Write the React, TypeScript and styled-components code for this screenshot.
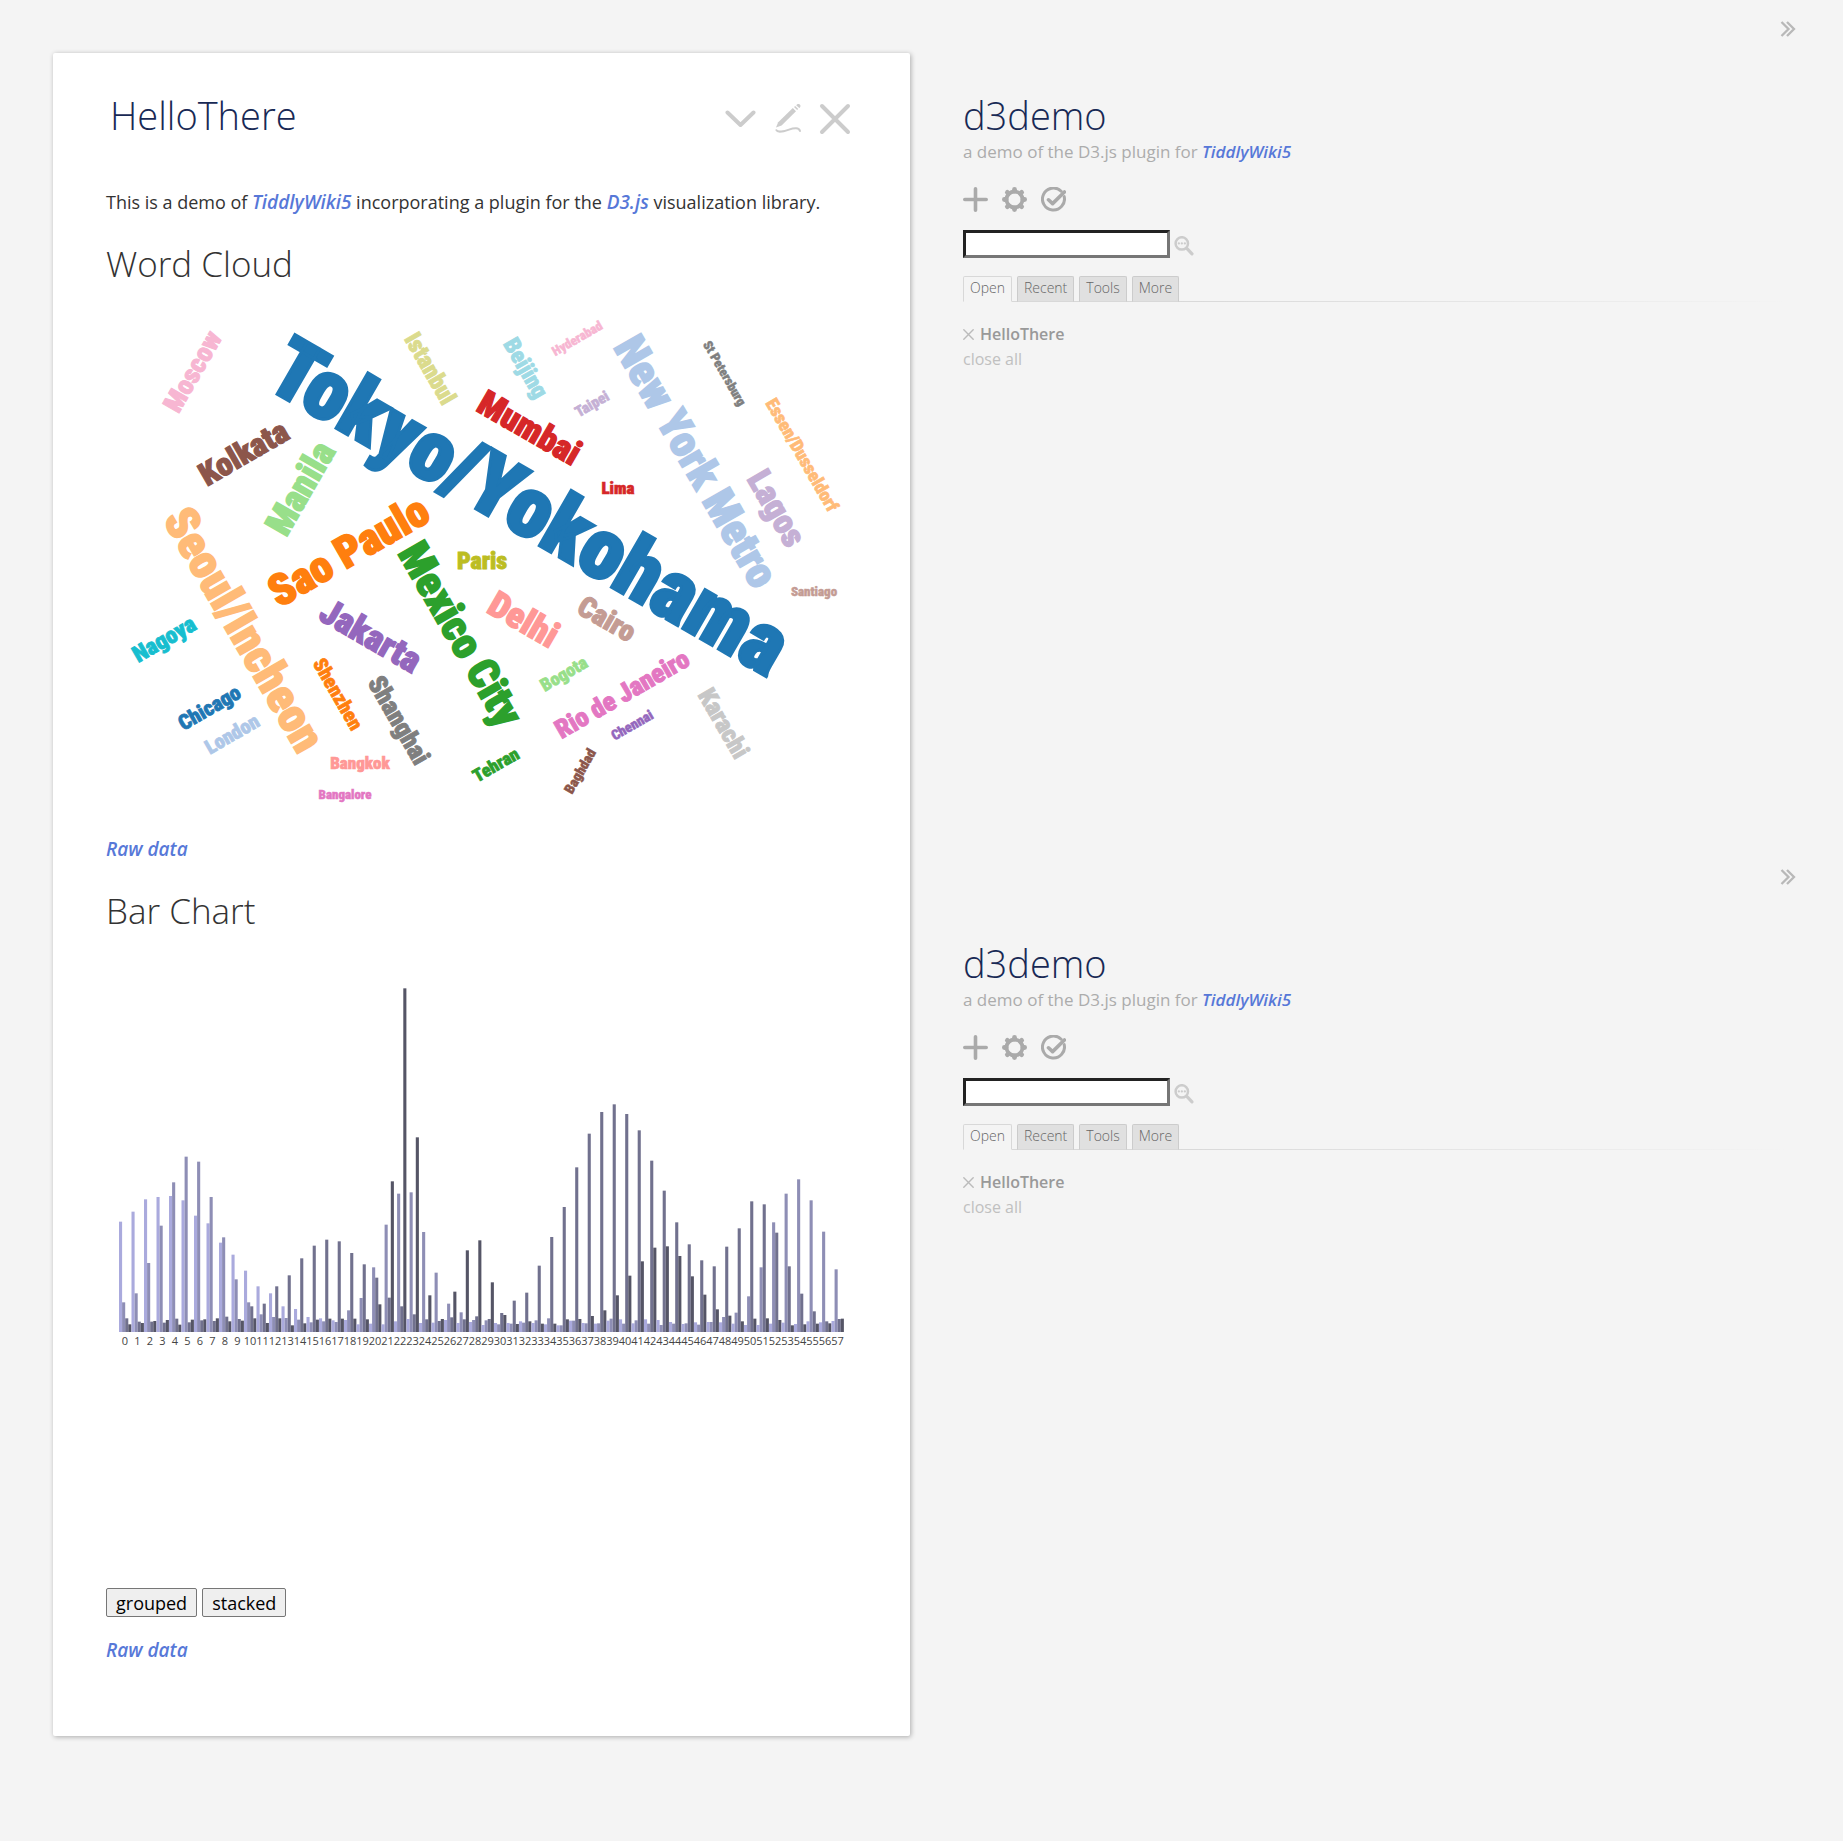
import React, { useState } from 'react';
import styled, { createGlobalStyle } from 'styled-components';

const GlobalStyle = createGlobalStyle`
  *, *::before, *::after { box-sizing: border-box; }
  body {
    margin: 0;
    background: #f4f4f4;
    color: #333;
    font-family: 'Segoe UI', 'Open Sans', 'Noto Sans', sans-serif;
    font-size: 18px;
    line-height: 28px;
  }
`;

const Page = styled.div`
  display: flex;
  align-items: flex-start;
  gap: 53px;
  min-height: 100vh;
  padding-left: 53px;
`;

const Card = styled.main`
  flex: 0 0 46.5vw;
  min-width: 0;
  margin: 53px 0 105px;
  padding: 39px 53px 72px;
  background: #fff;
  border-radius: 2px;
  box-shadow: 1px 1px 5px rgba(0, 0, 0, 0.3);
`;

const CardHeader = styled.header`
  display: flex;
  align-items: center;
  justify-content: space-between;
  padding: 0 6px 0 4px;
  margin-bottom: 50px;
`;

const Title = styled.h1`
  margin: 0;
  color: #182955;
  font-size: 38px;
  font-weight: 300;
  line-height: 46px;
`;

const Heading = styled.h2`
  margin: 26px 0 0;
  font-size: 35px;
  font-weight: 300;
  line-height: 44px;
`;

const Link = styled.a`
  color: #5778d8;
  font-style: italic;
  font-weight: 600;
  text-decoration: none;
`;

const Paragraph = styled.p<{ $top?: number }>`
  margin: ${(p) => p.$top ?? 0}px 0 0;

  ${Link} {
    font-size: 19px;
    line-height: 26px;
  }
`;

const Actions = styled.div`
  display: flex;
  gap: 15px;
  padding-top: 8px;
`;

const IconButton = styled.button<{ $size: number; $color?: string }>`
  display: block;
  width: ${(p) => p.$size}px;
  height: ${(p) => p.$size}px;
  padding: 0;
  border: 0;
  background: none;
  color: ${(p) => p.$color ?? '#aaa'};
  cursor: pointer;
`;

const Icon = styled.svg`
  display: block;
  width: 100%;
  height: 100%;
  fill: none;
  stroke: currentColor;
  stroke-linecap: round;
  stroke-linejoin: round;
`;

const Drawing = styled.svg`
  display: block;
  width: 100%;
  height: auto;
`;

const Word = styled.text`
  font-family: Impact, 'Roboto Condensed', Roboto, sans-serif;
  font-weight: 900;
  text-anchor: middle;
  stroke-width: 0.035em;
`;

const AxisLabel = styled.text`
  fill: #444;
  font-size: 11px;
  text-anchor: middle;
`;

const ButtonRow = styled.div`
  display: flex;
  gap: 5px;
`;

const ChartButton = styled.button`
  height: 29px;
  padding: 0 9px;
  border: 1px solid #767676;
  border-radius: 2px;
  background: #efefef;
  color: #000;
  font: inherit;
`;

const Sidebar = styled.aside`
  flex: 1;
  min-width: 0;
  padding-right: 47px;
`;

const SidebarBlock = styled.section`
  display: flex;
  flex-direction: column;
  min-height: 848px;
  padding-top: 21px;
`;

const ToggleRow = styled.div`
  display: flex;
  justify-content: flex-end;
  margin-bottom: 55px;
`;

const Subtitle = styled.p`
  margin: 0;
  color: #acacac;
  font-size: 17px;
  line-height: 27px;
`;

const Tools = styled.div`
  display: flex;
  gap: 14px;
  margin-top: 22px;
`;

const Search = styled.form`
  display: flex;
  align-items: flex-end;
  gap: 3px;
  margin-top: 18px;
`;

const SearchInput = styled.input`
  width: 207px;
  height: 28px;
  padding: 0 4px;
  border: 3px solid;
  border-color: #222 #767676 #767676 #222;
  border-radius: 0;
  background: #fff;
  font: inherit;
`;

const Tabs = styled.div`
  display: flex;
  gap: 5px;
  margin: 18px 6px 20px 0;
  background: linear-gradient(to right, #d8d8d8 25%, #f4f4f4) bottom / 100% 1px no-repeat;
`;

const Tab = styled.button<{ $selected: boolean }>`
  height: 26px;
  padding: 0 6px 2px;
  border: 1px solid ${(p) => (p.$selected ? '#d8d8d8' : '#ccc')};
  border-bottom-color: ${(p) => (p.$selected ? '#f4f4f4' : '#d8d8d8')};
  border-radius: 2px 2px 0 0;
  background: ${(p) => (p.$selected ? '#f4f4f4' : '#e0e0e0')};
  color: #666;
  font: inherit;
  font-size: 14px;
  font-weight: 300;
  line-height: 22px;
`;

const OpenList = styled.ul`
  margin: 0;
  padding: 0;
  list-style: none;
  font-size: 16px;
  line-height: 25px;
`;

const OpenItem = styled.li`
  display: flex;
  align-items: center;
  gap: 6px;
`;

const OpenLink = styled.a<{ $bold?: boolean }>`
  color: ${(p) => (p.$bold ? '#999' : '#c0c0c0')};
  font-weight: ${(p) => (p.$bold ? 600 : 400)};
  text-decoration: none;
`;

type CloudWord = [text: string, x: number, y: number, angle: number, size: number, color: string];

const cloud: CloudWord[] = [
  ['Tokyo/Yokohama', 531, 505, 30, 85, '#1f77b4'],
  ['New York Metro', 697, 461, 60, 44, '#aec7e8'],
  ['Sao Paulo', 348, 550, -30, 44, '#ff7f0e'],
  ['Seoul/Incheon', 245, 629, 60, 47, '#ffbb78'],
  ['Mexico City', 461, 634, 60, 43, '#2ca02c'],
  ['Manila', 300, 488, -60, 37, '#98df8a'],
  ['Mumbai', 530, 427, 30, 35, '#d62728'],
  ['Delhi', 524, 619, 30, 36, '#ff9896'],
  ['Jakarta', 371, 635, 30, 36, '#9467bd'],
  ['Lagos', 777, 508, 60, 34, '#c5b0d5'],
  ['Kolkata', 243, 452, -30, 32, '#8c564b'],
  ['Cairo', 607, 619, 30, 29, '#c49c94'],
  ['Rio de Janeiro', 622, 694, -30, 26, '#e377c2'],
  ['Moscow', 192, 371, -60, 27, '#f7b6d2'],
  ['Shanghai', 399, 720, 60, 26, '#7f7f7f'],
  ['Karachi', 724, 723, 60, 25, '#c7c7c7'],
  ['Paris', 482, 560, 0, 24, '#bcbd22'],
  ['Istanbul', 431, 368, 60, 24, '#dbdb8d'],
  ['Nagoya', 164, 639, -30, 23, '#17becf'],
  ['Beijing', 526, 368, 60, 23, '#9edae5'],
  ['Chicago', 209, 707, -30, 21, '#1f77b4'],
  ['London', 232, 734, -30, 20, '#aec7e8'],
  ['Shenzhen', 338, 694, 60, 20, '#ff7f0e'],
  ['Essen/Dusseldorf', 802, 455, 60, 18, '#ffbb78'],
  ['Tehran', 496, 765, -30, 18, '#2ca02c'],
  ['Bogota', 564, 674, -30, 18, '#98df8a'],
  ['Lima', 618, 488, 0, 17, '#d62728'],
  ['Bangkok', 360, 763, 0, 17, '#ff9896'],
  ['Chennai', 632, 725, -30, 14, '#9467bd'],
  ['Taipei', 592, 404, -30, 15, '#c5b0d5'],
  ['Baghdad', 580, 771, -60, 14, '#8c564b'],
  ['Santiago', 814, 591, 0, 13, '#c49c94'],
  ['Bangalore', 345, 794, 0, 13, '#e377c2'],
  ['Hyderabad', 577, 338, -30, 13, '#f7b6d2'],
  ['St Petersburg', 725, 373, 60, 13, '#7f7f7f'],
];

const seriesColors = ['#aaaadd', '#8e8eb5', '#71718e', '#555566'];
const CEILING = 1086;

// Level of each of the four series, measured down from the ceiling.
const samples: number[][] = [
  [755, 997, 1045, 1063], [725, 970, 1055, 1059], [688, 879, 1055, 1053], [681, 767, 1058, 1050],
  [678, 637, 1046, 1064], [691, 560, 1057, 1049], [737, 575, 1051, 1048], [760, 681, 1053, 1045],
  [818, 802, 1040, 1054], [854, 928, 1047, 1052], [902, 997, 1009, 1045], [949, 1033, 1001, 1059],
  [970, 1041, 949, 1045], [1009, 1044, 916, 1066], [1017, 1049, 865, 1060], [1041, 1057, 827, 1049],
  [1045, 1054, 809, 1046], [1051, 1056, 814, 1046], [1050, 1021, 849, 1046], [1063, 984, 883, 1048],
  [1061, 892, 923, 1003], [1063, 764, 983, 634], [1054, 671, 1009, 55], [1047, 667, 1033, 502],
  [1059, 786, 1048, 976], [1058, 908, 1053, 1047], [1050, 1001, 1042, 965], [1059, 1027, 1048, 841],
  [1056, 1050, 1039, 811], [1065, 1051, 1047, 937], [1059, 1063, 1029, 1035], [1059, 1061, 992, 1062],
  [1054, 1058, 968, 1054], [1059, 1051, 887, 1061], [1063, 1045, 801, 1061], [1066, 1066, 711, 1048],
  [1052, 1052, 592, 1047], [1059, 1060, 491, 1038], [1061, 1060, 426, 1021], [1052, 1046, 403, 976],
  [1048, 1061, 432, 917], [1060, 1051, 481, 874], [1048, 1061, 572, 833], [1050, 1065, 662, 829],
  [1056, 1061, 757, 858], [1062, 1060, 823, 919], [1057, 1064, 871, 974], [1056, 1056, 889, 1018],
  [1057, 1041, 830, 1037], [1061, 1028, 775, 1054], [1065, 979, 694, 1046], [1065, 892, 703, 1045],
  [1061, 757, 788, 1050], [1058, 671, 889, 1066], [1062, 628, 971, 1063], [1054, 691, 1024, 1061],
  [1057, 785, 1054, 1060], [1053, 898, 1047, 1046],
];

function WordCloud() {
  return (
    <Drawing viewBox="106 286 751 534" role="img" aria-label="Word cloud of city names">
      {cloud.map(([text, x, y, angle, size, color]) => (
        <Word
          key={text}
          fontSize={size}
          fill={color}
          stroke={color}
          transform={`translate(${x} ${y}) rotate(${angle})`}
          y={Math.round(size * 0.36)}
        >
          {text}
        </Word>
      ))}
    </Drawing>
  );
}

function BarChart({ stacked }: { stacked: boolean }) {
  const left = 119;
  const base = 1332;
  const step = 12.5;
  return (
    <Drawing viewBox="106 933 751 655" role="img" aria-label="Bar chart">
      {samples.map((levels, i) => {
        let below = 0;
        return (
          <g key={i}>
            {levels.map((level, s) => {
              const height = (CEILING - level) / 3;
              const y = base - height - (stacked ? below : 0);
              below += height;
              return (
                <rect
                  key={s}
                  x={left + i * step + (stacked ? 0 : s * 3.1)}
                  y={y}
                  width={stacked ? 11 : 3.1}
                  height={height}
                  fill={seriesColors[s]}
                />
              );
            })}
            <AxisLabel x={left + i * step + 6} y={1345}>{i}</AxisLabel>
          </g>
        );
      })}
    </Drawing>
  );
}

const gearTeeth = [0, 45, 90, 135, 180, 225, 270, 315];
const tabNames = ['Open', 'Recent', 'Tools', 'More'];

function SidebarPanel() {
  const [tab, setTab] = useState('Open');
  return (
    <SidebarBlock>
      <ToggleRow>
        <IconButton $size={16} $color="#b8b8b8" aria-label="Hide sidebar">
          <Icon viewBox="0 0 16 16" strokeWidth="2.3">
            <path d="M1.5 1 L8.5 8 L1.5 15 M7 1 L14 8 L7 15" strokeLinecap="butt" strokeLinejoin="miter" />
          </Icon>
        </IconButton>
      </ToggleRow>
      <Title>d3demo</Title>
      <Subtitle>
        a demo of the D3.js plugin for <Link href="#tiddlywiki">TiddlyWiki5</Link>
      </Subtitle>
      <Tools>
        <IconButton $size={25} aria-label="New tiddler">
          <Icon viewBox="0 0 25 25" strokeWidth="3.6">
            <path d="M12.5 1.8 V23.2 M1.8 12.5 H23.2" />
          </Icon>
        </IconButton>
        <IconButton $size={25} aria-label="Control panel">
          <Icon viewBox="0 0 25 25" strokeWidth="3.8">
            <circle cx="12.5" cy="12.5" r="8" />
            {gearTeeth.map((a) => (
              <path key={a} d="M12.5 4 V2.4" strokeWidth="4.8" transform={`rotate(${a} 12.5 12.5)`} />
            ))}
          </Icon>
        </IconButton>
        <IconButton $size={25} aria-label="Save changes">
          <Icon viewBox="0 0 25 25" strokeWidth="3">
            <path d="M20.2 4.2 A11 11 0 1 0 23.2 9.6" />
            <path d="M7.5 12.8 L11.6 16.6 L23.4 5" strokeWidth="3.6" />
          </Icon>
        </IconButton>
      </Tools>
      <Search onSubmit={(e) => e.preventDefault()}>
        <SearchInput type="text" aria-label="Search" />
        <IconButton $size={22} $color="#ccc" type="button" aria-label="Advanced search">
          <Icon viewBox="-1 0 22 22" strokeWidth="2.5">
            <circle cx="7.8" cy="7.4" r="6.2" />
            <path d="M12.8 12.4 L18 17.8" strokeWidth="3.2" />
            <path d="M4.8 7.4 h0.1 M7.8 7.4 h0.1 M10.8 7.4 h0.1" strokeWidth="2.2" />
          </Icon>
        </IconButton>
      </Search>
      <Tabs role="tablist">
        {tabNames.map((name) => (
          <Tab key={name} role="tab" aria-selected={tab === name} $selected={tab === name} onClick={() => setTab(name)}>
            {name}
          </Tab>
        ))}
      </Tabs>
      <OpenList>
        <OpenItem>
          <IconButton $size={11} $color="#bbb" aria-label="Close HelloThere">
            <Icon viewBox="0 0 11 11" strokeWidth="1.4">
              <path d="M0.8 0.8 L10.2 10.2 M10.2 0.8 L0.8 10.2" />
            </Icon>
          </IconButton>
          <OpenLink href="#hello" $bold>HelloThere</OpenLink>
        </OpenItem>
        <OpenItem>
          <OpenLink href="#close">close all</OpenLink>
        </OpenItem>
      </OpenList>
    </SidebarBlock>
  );
}

export default function App() {
  const [stacked, setStacked] = useState(false);
  return (
    <>
      <GlobalStyle />
      <Page>
        <Card>
          <CardHeader>
            <Title>HelloThere</Title>
            <Actions>
              <IconButton $size={32} $color="#ccc" aria-label="More actions">
                <Icon viewBox="0 0 32 32" strokeWidth="4">
                  <path d="M2.5 9.5 L15.5 22 L28.5 9.5" />
                </Icon>
              </IconButton>
              <IconButton $size={32} $color="#ccc" aria-label="Edit">
                <Icon viewBox="0 0 32 32" strokeWidth="2">
                  <path d="M4 24.6 L6.2 19.2 L20.8 5 L24 8.2 L9.6 22.6 Z" fill="currentColor" stroke="none" />
                  <path d="M22 4 L23.2 2.9 L26.2 5.9 L25.1 7.1 Z M25 1.6 C27 0 29.6 2.4 28 4.4 L27.2 5.1 L24.2 2.3 Z" fill="currentColor" stroke="none" />
                  <path d="M4.4 27.2 C5.4 29.6 12 28.4 17 26.6 C22.5 24.6 27 24.4 28 28" />
                </Icon>
              </IconButton>
              <IconButton $size={32} $color="#ccc" aria-label="Close">
                <Icon viewBox="0 0 32 32" strokeWidth="4">
                  <path d="M3 3 L29 29 M29 3 L3 29" />
                </Icon>
              </IconButton>
            </Actions>
          </CardHeader>
          <Paragraph>
            This is a demo of <Link href="#tiddlywiki">TiddlyWiki5</Link> incorporating a plugin for the{' '}
            <Link href="#d3">D3.js</Link> visualization library.
          </Paragraph>
          <Heading>Word Cloud</Heading>
          <WordCloud />
          <Paragraph $top={15}>
            <Link href="#cloud-data">Raw data</Link>
          </Paragraph>
          <Heading>Bar Chart</Heading>
          <BarChart stacked={stacked} />
          <ButtonRow>
            <ChartButton onClick={() => setStacked(false)}>grouped</ChartButton>
            <ChartButton onClick={() => setStacked(true)}>stacked</ChartButton>
          </ButtonRow>
          <Paragraph $top={19}>
            <Link href="#chart-data">Raw data</Link>
          </Paragraph>
        </Card>
        <Sidebar>
          <SidebarPanel />
          <SidebarPanel />
        </Sidebar>
      </Page>
    </>
  );
}
